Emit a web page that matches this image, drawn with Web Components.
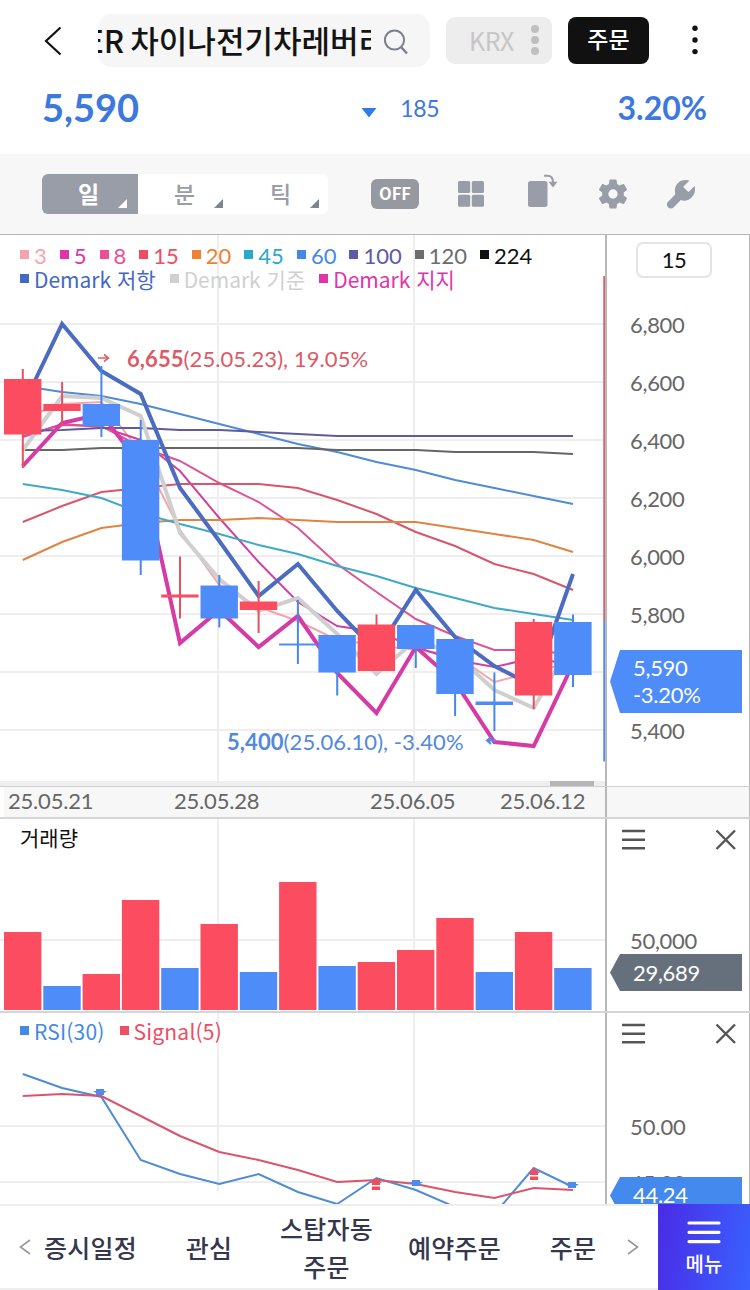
<!DOCTYPE html>
<html lang="ko">
<head>
<meta charset="UTF-8">
<title>차트</title>
<style>
  body {
    margin: 0;
    background: #fff;
    font-family: Lato, "Noto Sans CJK KR", sans-serif;
  }
</style>
</head>
<body>
<stock-app></stock-app>

<script>
  const RED = "#fb4d5f";
  const BLUE = "#4d8cf9";

  // x centre of every trading day
  const dayX = (i) => 22.8 + i * 39.3;

  // Build the points attribute from one y per day
  const points = (ys) => ys.map((y, i) => `${dayX(i).toFixed(1)},${y}`).join(" ");

  const line = (color, width, ys) =>
    `<polyline fill="none" stroke="${color}" stroke-width="${width}" points="${points(ys)}"/>`;

  // Shared parent: puts template and styles in the shadow root
  class BaseElement extends HTMLElement {
    constructor() {
      super();
      this.attachShadow({ mode: "open" });
    }

    connectedCallback() {
      const template = document.createElement("template");
      template.innerHTML = `<style>${this.getStyles()}</style>${this.getTemplate()}`;
      this.shadowRoot.appendChild(template.content.cloneNode(true));
    }
  }

  class StockHeader extends BaseElement {
    getTemplate() {
      return `
        <div class="top">
          <svg class="back" width="18" height="30" viewBox="0 0 18 30"><path d="M16.5 1.5 2 15l14.5 13.5" fill="none" stroke="#111" stroke-width="2.2"/></svg>
          <div class="search">
            <div class="name"><span>ER 차이나전기차레버리</span></div>
            <svg width="26" height="28" viewBox="0 0 26 28"><circle cx="11.5" cy="12" r="9.6" fill="none" stroke="#7c808b" stroke-width="2"/><path d="m18 19 6 6.500" stroke="#7c808b" stroke-width="2.4"/></svg>
          </div>
          <div class="market">KRX
            <svg width="8" height="30" viewBox="0 0 8 30" fill="#bfbfbf"><circle cx="4" cy="4" r="4"/><circle cx="4" cy="15" r="4"/><circle cx="4" cy="26" r="4"/></svg>
          </div>
          <div class="order">주문</div>
          <svg class="more" width="6" height="30" viewBox="0 0 6 30" fill="#111"><circle cx="3" cy="3.2" r="2.7"/><circle cx="3" cy="15" r="2.7"/><circle cx="3" cy="26.6" r="2.7"/></svg>
        </div>
        <div class="quote">
          <b class="price">5,590</b>
          <span class="diff"><svg width="16" height="10" viewBox="0 0 16 10"><path d="M.5 0h15L8 9.5z" fill="#2f7be8"/></svg>185</span>
          <b class="rate">3.20%</b>
        </div>`;
    }
    getStyles() {
      return `
        :host { display: block; height: 154px; background: #fff; }
        .top { display: flex; height: 80px; align-items: center; }
        .back { margin-left: 44px; margin-top: 2px; }
        .search {
          display: flex; align-items: center; width: 332px; height: 53px;
          margin-left: 36px; border-radius: 14px; background: #f6f6f6;
        }
        .name {
          display: flex; justify-content: flex-end; width: 273px; overflow: hidden; white-space: nowrap;
          font: 500 31px/44px "Noto Sans CJK KR", sans-serif; color: #141414; word-spacing: -2.5px;
        }
        .name span { margin-right: -16px; margin-top: -1px; }
        .search svg { margin: 4px 0 0 12px; }
        .market {
          display: flex; align-items: center; justify-content: space-between; box-sizing: border-box;
          width: 106px; height: 47px; margin-left: 16px; padding: 0 13px 0 23px;
          border-radius: 9px; background: #ededed; color: #c6c6c6;
          font: 400 25px/45px "Noto Sans CJK KR", sans-serif; letter-spacing: -0.5px;
        }
        .order {
          width: 81px; height: 47px; margin-left: 16px; border-radius: 8px; background: #111;
          color: #fff; text-align: center; font: 500 23px/43px "Noto Sans CJK KR", sans-serif;
        }
        .more { margin-left: 43px; }
        .quote {
          display: grid; grid-template-columns: 1fr 1fr 1fr; align-items: start;
          padding: 0 43px 0 42px; color: #3c78de;
        }
        .price { font-size: 38px; line-height: 54px; letter-spacing: 0; }
        .diff { font-size: 23px; line-height: 57px; margin-left: 97px; letter-spacing: -0.3px; }
        .diff svg { margin: 0 23.500px -1px 0; }
        .rate { font-size: 32px; line-height: 55px; text-align: right; }
      `;
    }
  }
  customElements.define("stock-header", StockHeader);

  class PeriodTab extends BaseElement {
    getTemplate() {
      return `<slot></slot><svg width="9" height="9" viewBox="0 0 9 9"><path d="M9 0v9H0z" fill="currentColor"/></svg>`;
    }
    getStyles() {
      return `
        :host {
          display: grid; grid-template-columns: 1fr 20px; align-items: center; width: 96px; height: 40px;
          box-sizing: border-box; padding: 0 0 2px 36px; flex: none;
          color: #999da6; font: 500 23px/34px "Noto Sans CJK KR", sans-serif;
        }
        :host([active]) { background: #999da8; color: #fff; font-weight: 700; }
        svg { align-self: end; margin: 0 0 4px 0; color: #7f838d; }
        :host([active]) svg { color: #fff; }
      `;
    }
  }
  customElements.define("period-tab", PeriodTab);

  class ChartToolbar extends BaseElement {
    getTemplate() {
      return `
        <div class="tabs">
          <period-tab active>일</period-tab>
          <period-tab>분</period-tab>
          <period-tab>틱</period-tab>
        </div>
        <div class="off">OFF</div>
        <svg width="26" height="26" viewBox="0 0 26 26"><rect width="12.2" height="12" rx="1.500"/><rect x="13.8" width="12.2" height="12" rx="1.500"/><rect y="13.8" width="12.2" height="12" rx="1.500"/><rect x="13.8" y="13.8" width="12.2" height="12" rx="1.500"/></svg>
        <svg width="32" height="34" viewBox="0 0 32 34"><rect x="1" y="7" width="19.500" height="26" rx="2.500"/><path d="M17 1.800h3.500c4 0 5.500 2.500 5.500 6.500" fill="none" stroke="#999da8" stroke-width="2"/><path d="M21.500 7.800h9L26 13.600z"/></svg>
        <svg width="36" height="36" viewBox="0 0 24 24"><path d="M19.140 12.940c.040-.300.060-.610.060-.940s-.020-.640-.070-.940l2.030-1.580a.49.49 0 0 0 .120-.610l-1.920-3.320a.488.488 0 0 0-.590-.220l-2.390.960c-.500-.380-1.030-.700-1.620-.940l-.360-2.540a.484.484 0 0 0-.480-.410h-3.840c-.240 0-.430.170-.470.410l-.360 2.540c-.590.240-1.130.570-1.620.940l-2.390-.960c-.220-.080-.470 0-.590.220L2.740 8.870c-.120.210-.080.470.120.610l2.030 1.580c-.050.300-.090.630-.090.940s.020.640.070.940l-2.030 1.580a.49.49 0 0 0-.120.610l1.920 3.320c.120.220.370.290.590.220l2.390-.960c.500.380 1.030.700 1.620.940l.360 2.540c.050.240.240.410.480.410h3.840c.240 0 .440-.170.470-.410l.360-2.540c.590-.240 1.130-.560 1.620-.940l2.390.960c.220.080.470 0 .590-.220l1.920-3.320c.120-.220.070-.470-.120-.610zM12 15.100A3.100 3.100 0 1 1 12 8.900a3.100 3.100 0 0 1 0 6.200z"/></svg>
        <svg width="30" height="30" viewBox="0 0 30 30"><path d="M1.600 23.200 9.400 15.300C7.200 8 12 1 19.500 1c1.600 0 2.700.2 3.900.8l-5.700 5.500c-.4.400-.4.900 0 1.300l4.100 3.900c.4.400.9.400 1.300 0l5.400-5.600c2.200 6.500-2.500 14.800-10.300 14.800-1.200 0-2.400-.2-3.400-.6l-7 7.100c-1.700 1.700-4 1.700-5.600.2-1.700-1.700-1.700-3.800-.6-5.200z"/></svg>`;
    }
    getStyles() {
      return `
        :host {
          display: grid; grid-template-columns: 329px 87px 69px 68px 71px 30px; align-items: center;
          box-sizing: border-box; height: 81px; padding: 0 0 1px 42px;
          background: #f7f7f7; border-bottom: 1px solid #b5b5b5;
        }
        svg { fill: #999da8; }
        svg:nth-of-type(2) { margin-top: -6px; }
        .tabs { display: flex; width: 286px; height: 40px; border-radius: 6px; overflow: hidden; background: #fff; }
        .off {
          width: 48px; height: 30px; margin-top: 1px; border-radius: 6px; background: #96999f; color: #fff;
          text-align: center; font: 700 16.500px/28px "Noto Sans CJK KR", sans-serif;
        }
      `;
    }
  }
  customElements.define("chart-toolbar", ChartToolbar);

  class LegendItem extends BaseElement {
    getTemplate() {
      this.style.color = this.getAttribute("color");
      return `<i></i><slot></slot>`;
    }
    getStyles() {
      return `
        :host { display: flex; height: 24px; gap: 5px; font-size: 22px; line-height: 24px; white-space: nowrap; }
        :host([text]) { font-family: "Noto Sans CJK KR", sans-serif; font-size: 21px; line-height: 23px; }
        i { width: 9px; height: 9px; margin-top: 6px; background: currentColor; }
      `;
    }
  }
  customElements.define("legend-item", LegendItem);

  // Arrow-shaped value marker that lies over the axis
  class ValueTag extends BaseElement {
    getTemplate() {
      return `<slot></slot>`;
    }
    getStyles() {
      return `
        :host {
          display: block; position: absolute; left: 3px; width: 132px; box-sizing: border-box; padding-left: 23px;
          background: var(--tag, #4d8cf9); color: #fff; font-size: 22px; line-height: 27px; letter-spacing: -0.3px;
          clip-path: polygon(0 50%, 10px 0, 100% 0, 100% 100%, 10px 100%);
        }
      `;
    }
  }
  customElements.define("value-tag", ValueTag);

  class PanelTools extends BaseElement {
    getTemplate() {
      return `
        <svg width="24" height="22" viewBox="0 0 24 22"><path d="M0 2h23M0 10.700h23M0 19.300h23" stroke="#555" stroke-width="2.400"/></svg>
        <svg width="22" height="22" viewBox="0 0 22 22"><path d="m1.500 1.500 18.500 18.500M20 1.500 1.500 20" stroke="#555" stroke-width="2.400"/></svg>`;
    }
    getStyles() {
      return `:host { display: flex; justify-content: space-between; padding: 10px 12px 0 15px; height: 22px; }`;
    }
  }
  customElements.define("panel-tools", PanelTools);

  class ChartRow extends BaseElement {
    getTemplate() {
      return `<div class="plot"><slot></slot></div><div class="axis"><slot name="axis"></slot></div>`;
    }
    getStyles() {
      return `
        :host { display: grid; grid-template-columns: 605px 145px; overflow: hidden; }
        .plot { position: relative; overflow: hidden; }
        .axis { position: relative; box-sizing: border-box; border-left: 2px solid #b8b8b8; border-right: 1px solid #b8b8b8; overflow: hidden; }
      `;
    }
  }
  customElements.define("chart-row", ChartRow);

  class PricePanel extends BaseElement {
    getTemplate() {
      // color, top, bottom, high, low
      const candles = [
        [RED, 379, 434.500, 369, 468], [RED, 404, 411, 382, 426], [BLUE, 404, 426, 366, 437],
        [BLUE, 440, 560.500, 420, 575], [RED, 594.500, 597.500, 556.500, 618.500], [BLUE, 585.500, 618.500, 575, 627.500],
        [RED, 601.500, 610, 581, 633], [BLUE, 643.500, 645.500, 600, 664], [BLUE, 635, 672.500, 635, 695.500],
        [RED, 624.500, 671, 614.500, 671], [BLUE, 625, 649, 625, 668], [BLUE, 639, 694, 639, 716],
        [BLUE, 701.500, 705, 672.500, 731], [RED, 622, 695.500, 619, 709], [BLUE, 622, 675, 614.500, 687],
      ].map(([c, top, bottom, high, low], i) => `
        <path d="M${dayX(i)} ${high}V${low}" stroke="${c === RED ? "#e8505f" : "#4a86e8"}" stroke-width="2"/>
        <rect x="${dayX(i) - 18.800}" y="${top}" width="37.400" height="${bottom - top}" fill="${c}"/>`).join("");

      // the empty step lies under the current price tag
      const prices = ["6,800", "6,600", "6,400", "6,200", "6,000", "5,800", "", "5,400"];

      return `
        <chart-row>
          <svg width="605" height="551" viewBox="0 235 605 551">
            <path d="M0 324h605M0 382h605M0 440h605M0 498h605M0 556h605M0 614h605M0 672h605M0 730h605M218 235v551M414 235v551" stroke="#eee" stroke-width="2"/>
            ${line("#f3a5ae", 2, [418, 404, 402, 452, 530, 585, 607, 621, 640, 645, 650, 655, 682, 672, 662])}
            ${line("#cf42a3", 2, [437, 424, 427, 440, 471, 518, 562, 602, 626, 632, 647, 660, 667, 658, 665])}
            ${line("#dd5590", 2, [436, 425, 426, 447, 461, 483, 502, 528, 564, 592, 619, 636, 650, 650, 655])}
            ${line("#d8566b", 2, [522, 506, 492, 488, 484, 484, 484, 488, 500, 514, 532, 546, 564, 574, 590])}
            ${line("#df8443", 2, [560, 542, 528, 523, 520, 520, 518, 520, 522, 522, 522, 528, 534, 540, 552])}
            ${line("#3eaac4", 2, [484, 490, 498, 513, 524, 534, 545, 554, 566, 576, 588, 598, 608, 614, 620])}
            ${line("#508bd6", 2, [386, 392, 396, 404, 414, 424, 434, 444, 452, 462, 470, 480, 488, 496, 504])}
            ${line("#5f5b9f", 2, [431, 430, 428, 428, 430, 430, 432, 434, 436, 436, 436, 436, 436, 436, 436])}
            ${line("#666", 2, [450, 450, 448, 448, 448, 448, 448, 448, 450, 450, 450, 452, 452, 452, 454])}
            ${line("#cfcfcf", 4, [450, 396, 398, 416, 533, 579, 611, 598, 634, 674, 640, 654, 690, 708, 640])}
            ${line("#4b6cc0", 4, [406, 324, 371, 394, 488, 541, 596, 564, 611, 652, 590, 637, 666, 686, 574])}
            ${line("#d63aa5", 4, [466, 423, 414, 465, 643, 610, 647, 616, 673, 713, 647, 682, 742, 746, 664])}
            ${candles}
            <path d="M98 358h10M104 354.500l4.500 3.500-4.500 3.500" fill="none" stroke="#e0606c" stroke-width="1.600"/>
            <path d="M496 740.500h-8M491 737l-4 3.500 4 3.500" fill="none" stroke="#508bea" stroke-width="2"/>
            <text x="127" y="367" fill="#dc5a66" font-size="22" letter-spacing="0.080"><tspan font-weight="700">6,655</tspan>(25.05.23), 19.05%</text>
            <text x="227" y="750" fill="#5289dd" font-size="22" letter-spacing="0.080"><tspan font-weight="700">5,400</tspan>(25.06.10), -3.40%</text>
            <path d="M604.500 276v345" stroke="#e0606c" stroke-width="2.500"/>
            <path d="M604.500 621v140.500" stroke="#4d8cf9" stroke-width="2.500"/>
            <path d="M0 783.500h605" stroke="#eee" stroke-width="5"/>
            <path d="M550 783.500h44" stroke="#b5b5b5" stroke-width="5"/>
          </svg>
          <div class="legend">
            <div class="row">
              <legend-item color="#f7a3ae">3</legend-item>
              <legend-item color="#df35a8">5</legend-item>
              <legend-item color="#ed4f95">8</legend-item>
              <legend-item color="#ee4d63">15</legend-item>
              <legend-item color="#f08033">20</legend-item>
              <legend-item color="#26aacb">45</legend-item>
              <legend-item color="#4589e6">60</legend-item>
              <legend-item color="#5b5ba8">100</legend-item>
              <legend-item color="#6c6c6c">120</legend-item>
              <legend-item color="#111">224</legend-item>
            </div>
            <div class="row">
              <legend-item text color="#4468c4">Demark 저항</legend-item>
              <legend-item text color="#d0d0d0">Demark 기준</legend-item>
              <legend-item text color="#df35a8">Demark 지지</legend-item>
            </div>
          </div>
          <div slot="axis">
            <div class="count">15</div>
            <div class="prices">${prices.map((p) => `<div>${p}</div>`).join("")}</div>
            <value-tag style="top: 415px; height: 63px; padding-top: 4px">5,590<br>-3.20%</value-tag>
          </div>
        </chart-row>`;
    }
    getStyles() {
      return `
        :host { display: block; height: 551px; }
        chart-row { height: 551px; }
        svg { display: block; }
        .legend { position: absolute; left: 20px; top: 9px; }
        .row { display: flex; gap: 13px; }
        .row + .row { gap: 14px; }
        .count {
          box-sizing: border-box; width: 76px; height: 36px; margin: 7px 0 0 29px;
          border: 2px solid #e4e4e4; border-radius: 7px;
          font-size: 22px; line-height: 32px; text-align: center; color: #111; letter-spacing: -0.5px;
        }
        .prices { margin: 18px 0 0 23px; font-size: 22px; line-height: 58px; color: #666; letter-spacing: -0.3px; }
        .prices div { height: 58px; }
      `;
    }
  }
  customElements.define("price-panel", PricePanel);

  class DateAxis extends BaseElement {
    getTemplate() {
      return `
        <chart-row>
          <div class="dates"><span>25.05.21</span><span>25.05.28</span><span>25.06.05</span><span>25.06.12</span></div>
        </chart-row>`;
    }
    getStyles() {
      return `
        :host { display: block; background: #f7f7f7; border-top: 1px solid #d0d0d0; border-bottom: 2px solid #d5d5d5; }
        chart-row { height: 30px; }
        .dates {
          display: grid; grid-template-columns: 166px 196px 130px 100px; padding-left: 8px; height: 30px;
          font-size: 22px; line-height: 28px; color: #666; letter-spacing: -0.2px; white-space: nowrap;
          background: linear-gradient(#fff, #fff) 0 0 / 4px 30px no-repeat;
        }
      `;
    }
  }
  customElements.define("date-axis", DateAxis);

  class VolumePanel extends BaseElement {
    getTemplate() {
      const bars = [
        [932, RED], [986, BLUE], [974, RED], [900, RED], [968, BLUE], [924, RED], [972, BLUE], [882, RED],
        [966, BLUE], [962, RED], [950, RED], [918, RED], [972, BLUE], [932, RED], [968, BLUE],
      ].map(([top, c], i) => `<rect x="${dayX(i) - 18.800}" y="${top}" width="37.400" height="${1010 - top}" fill="${c}"/>`).join("");

      return `
        <chart-row>
          <svg width="605" height="192" viewBox="0 819 605 192">
            <path d="M0 940h605M218 819v192M414 819v192" stroke="#eee" stroke-width="2"/>
            ${bars}
          </svg>
          <div class="title">거래량</div>
          <div slot="axis">
            <panel-tools></panel-tools>
            <div class="scale">50,000</div>
            <value-tag style="--tag: #66707d; top: 135px; height: 37px; line-height: 37px">29,689</value-tag>
          </div>
        </chart-row>`;
    }
    getStyles() {
      return `
        :host { display: block; border-bottom: 2px solid #d5d5d5; }
        chart-row { height: 192px; }
        svg { display: block; }
        .title { position: absolute; left: 20px; top: 3px; color: #111; font: 21px/30px "Noto Sans CJK KR", sans-serif; }
        .scale { margin: 76px 0 0 23px; font-size: 22px; line-height: 28px; color: #666; letter-spacing: -0.3px; }
      `;
    }
  }
  customElements.define("volume-panel", VolumePanel);

  class RsiPanel extends BaseElement {
    getTemplate() {
      const down = (x, y) => `<path d="M${x - 4} ${y - 3}h8v2h3l-3 2v2h-8v-2l-3-2h3z" fill="#508bea"/>`;
      const up = (x, y) => `<path d="M${x} ${y}l6 5h-2v2h-8v-2h-2zM${x - 4} ${y + 8.500}h8v3.500h-8z" fill="#ee4d60"/>`;

      return `
        <chart-row>
          <svg width="605" height="191" viewBox="0 1013 605 191">
            <path d="M0 1126h605M0 1182h605M218 1013v178M414 1013v178" stroke="#eee" stroke-width="2"/>
            ${line("#508bd6", 2, [1074, 1088, 1097, 1160, 1174, 1184, 1174, 1192, 1204, 1178, 1190, 1207, 1214, 1168, 1187])}
            ${line("#d8566b", 2, [1096, 1094, 1096, 1116, 1136, 1152, 1160, 1170, 1182, 1180, 1184, 1192, 1198, 1188, 1190])}
            ${down(100, 1092)}${down(416, 1183)}${down(572, 1185)}${up(376, 1178)}${up(534, 1168)}
          </svg>
          <div class="legend">
            <legend-item text color="#4589e6">RSI(30)</legend-item>
            <legend-item text color="#ee4d63">Signal(5)</legend-item>
          </div>
          <div slot="axis">
            <panel-tools></panel-tools>
            <div class="scale">50.00</div>
            <div class="scale">45.00</div>
            <value-tag style="--tag: #4489ee; top: 164px; height: 37px; line-height: 36px">44.24</value-tag>
          </div>
        </chart-row>`;
    }
    getStyles() {
      return `
        :host { display: block; height: 191px; }
        chart-row { height: 191px; }
        svg { display: block; }
        .legend { position: absolute; left: 20px; top: 7px; display: flex; gap: 15px; }
        legend-item { letter-spacing: 0.200px; }
        .scale { margin-left: 23px; font-size: 22px; line-height: 56px; color: #666; letter-spacing: -0.1px; }
        panel-tools { height: 44px; }
        panel-tools + .scale { margin-top: 32px; }
      `;
    }
  }
  customElements.define("rsi-panel", RsiPanel);

  class BottomNav extends BaseElement {
    getTemplate() {
      return `
        <div class="items">
          <svg width="12" height="16" viewBox="0 0 12 16"><path d="M11 1 1.500 8l9.500 7" fill="none" stroke="#999" stroke-width="1.600"/></svg>
          <span>증시일정</span><span>관심</span><span>스탑자동<br>주문</span><span>예약주문</span><span>주문</span>
          <svg width="12" height="16" viewBox="0 0 12 16"><path d="m1 1 9.500 7L1 15" fill="none" stroke="#999" stroke-width="1.600"/></svg>
        </div>
        <div class="menu">
          <svg width="34" height="24" viewBox="0 0 34 24"><path d="M2 2h30M2 11.300h30M2 20.600h30" stroke="#fff" stroke-width="3.200" stroke-linecap="round"/></svg>
          메뉴
        </div>`;
    }
    getStyles() {
      return `
        :host { display: grid; grid-template-columns: 658px 92px; height: 86px; background: #fff; }
        .items {
          display: grid; grid-template-columns: 12px 119px 118px 117px 139px 98px 12px; align-items: center; justify-items: center;
          box-sizing: border-box; height: 86px; padding: 0 0 0 19px;
          border-top: 2px solid #eee; border-bottom: 2px solid #eee;
          font: 500 25px/38px "Noto Sans CJK KR", sans-serif; color: #34374d; text-align: center; letter-spacing: 0.250px;
        }
        .items svg:last-child { margin-left: 9px; }
        .menu {
          display: flex; flex-direction: column; align-items: center; box-sizing: border-box; padding-top: 17px;
          background: linear-gradient(100deg, #4a2ae6, #3962ff);
          color: #fff; font: 500 20px/30px "Noto Sans CJK KR", sans-serif;
        }
        .menu svg { margin-bottom: 4px; }
      `;
    }
  }
  customElements.define("bottom-nav", BottomNav);

  class StockApp extends BaseElement {
    getTemplate() {
      return `
        <stock-header></stock-header>
        <chart-toolbar></chart-toolbar>
        <price-panel></price-panel>
        <date-axis></date-axis>
        <volume-panel></volume-panel>
        <rsi-panel></rsi-panel>
        <bottom-nav></bottom-nav>`;
    }
    getStyles() {
      return `:host { display: block; width: 750px; height: 1290px; overflow: hidden; }`;
    }
  }
  customElements.define("stock-app", StockApp);
</script>
</body>
</html>
